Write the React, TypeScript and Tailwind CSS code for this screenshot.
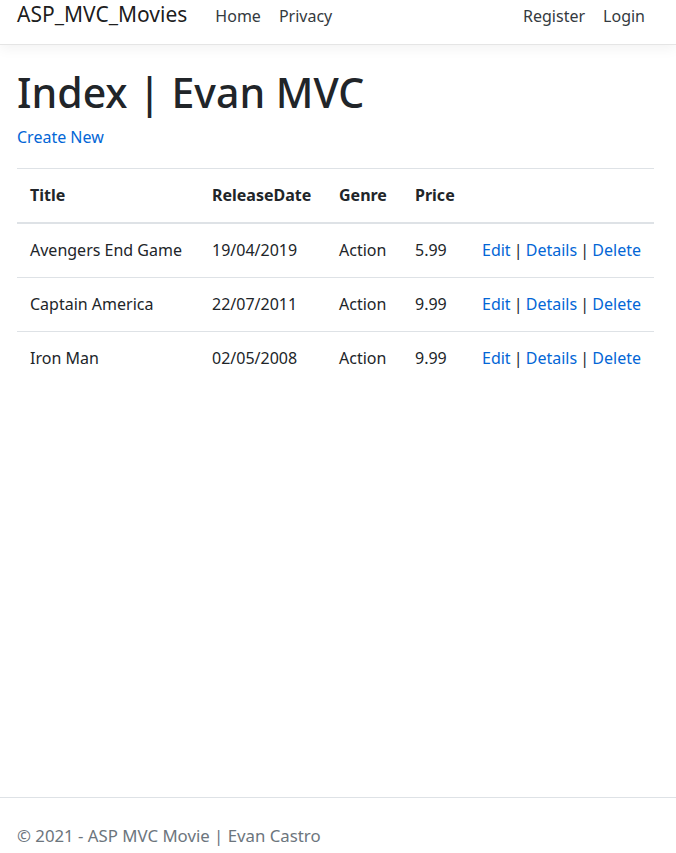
import React from "react";

const movies = [
  { title: "Avengers End Game", date: "19/04/2019", genre: "Action", price: "5.99" },
  { title: "Captain America", date: "22/07/2011", genre: "Action", price: "9.99" },
  { title: "Iron Man", date: "02/05/2008", genre: "Action", price: "9.99" },
];

function Actions() {
  return (
    <span className="[word-spacing:-1px]">
      <a href="#" className="text-[#0366d6]">Edit</a> | <a href="#" className="text-[#0366d6]">Details</a> |{" "}
      <a href="#" className="text-[#0366d6]">Delete</a>
    </span>
  );
}

export default function App() {
  return (
    <div
      className="min-h-[853px] flex flex-col bg-white text-[#212529] text-[16px] leading-[24px]"
      style={{ fontFamily: '"Noto Sans", "Open Sans", sans-serif' }}
    >
      <header className="h-[45px] border-b border-[#e5e5e5] shadow-[0_4px_12px_rgba(0,0,0,0.05)] bg-white">
        <nav className="flex items-baseline pl-[17px] pr-[31px]">
          <a href="#" className="text-[21px] leading-[28px] text-[rgba(0,0,0,0.9)] mr-[28px]">ASP_MVC_Movies</a>
          <a href="#" className="text-[#343a40] mr-[18px]">Home</a>
          <a href="#" className="text-[#343a40]">Privacy</a>
          <a href="#" className="text-[#343a40] ml-auto mr-[18px]">Register</a>
          <a href="#" className="text-[#343a40]">Login</a>
        </nav>
      </header>

      <main className="pl-[17px] pr-[22px]">
        <h1 className="mt-[23px] text-[41px] leading-[49px] font-medium">Index | Evan MVC</h1>
        <p className="mt-[8px] mb-[19px]">
          <a href="#" className="text-[#0366d6]">Create New</a>
        </p>
        <table className="w-full table-fixed border-collapse">
          <thead>
            <tr>
              <th className="w-[182px] text-left font-bold px-[13px] py-[13px] leading-[27px] border-t border-b-2 border-[#dee2e6]">Title</th>
              <th className="w-[127px] text-left font-bold px-[13px] py-[13px] leading-[27px] border-t border-b-2 border-[#dee2e6]">ReleaseDate</th>
              <th className="w-[76px] text-left font-bold px-[13px] py-[13px] leading-[27px] border-t border-b-2 border-[#dee2e6]">Genre</th>
              <th className="w-[67px] text-left font-bold px-[13px] py-[13px] leading-[27px] border-t border-b-2 border-[#dee2e6]">Price</th>
              <th className="text-left font-bold px-[13px] py-[13px] leading-[27px] border-t border-b-2 border-[#dee2e6]"></th>
            </tr>
          </thead>
          <tbody>
            {movies.map((m) => (
              <tr key={m.title}>
                <td className="px-[13px] py-[13px] leading-[27px] border-t border-[#dee2e6] whitespace-nowrap">{m.title}</td>
                <td className="px-[13px] py-[13px] leading-[27px] border-t border-[#dee2e6]">{m.date}</td>
                <td className="px-[13px] py-[13px] leading-[27px] border-t border-[#dee2e6]">{m.genre}</td>
                <td className="px-[13px] py-[13px] leading-[27px] border-t border-[#dee2e6]">{m.price}</td>
                <td className="px-[13px] py-[13px] leading-[27px] border-t border-[#dee2e6] whitespace-nowrap">
                  <Actions />
                </td>
              </tr>
            ))}
          </tbody>
        </table>
      </main>

      <footer className="mt-auto h-[56px] border-t border-[#dee2e6] pl-[17px] pt-[26px] text-[16.8px] text-[#6c757d] whitespace-nowrap">
        © 2021 - ASP MVC Movie | Evan Castro
      </footer>
    </div>
  );
}
